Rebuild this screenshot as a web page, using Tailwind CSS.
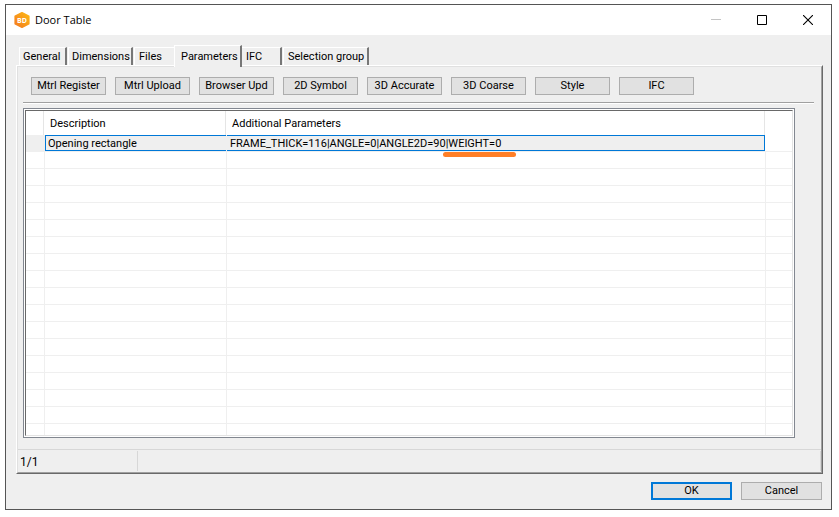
<!DOCTYPE html>
<html lang="en">
<head>
  <meta charset="UTF-8" />
  <meta name="viewport" content="width=device-width, initial-scale=1.0"/>
  <title>Door Table</title>
  <script src="https://cdn.jsdelivr.net/npm/@tailwindcss/browser@4"></script>
</head>
<body class="bg-white text-black text-[11px] leading-4 font-['Roboto','Liberation_Sans',sans-serif]">
  <div class="pt-1 pl-[5px] pr-[7px]">
    <div class="border border-[#555] bg-[#efefef]">

      <!-- Title bar -->
      <header class="flex items-center h-[30px] bg-white pl-2">
        <svg class="w-4 h-4" viewBox="0 0 16 16">
          <defs>
            <linearGradient id="logo" x1="0" y1="1" x2="1" y2="0">
              <stop offset="0" stop-color="#f47b20"/>
              <stop offset="1" stop-color="#fdb813"/>
            </linearGradient>
          </defs>
          <path d="M8 0.8 L14.8 4.2 V11.8 L8 15.2 L1.2 11.8 V4.2 Z" fill="url(#logo)" stroke="url(#logo)" stroke-width="1.6" stroke-linejoin="round"/>
          <text x="8" y="10.6" text-anchor="middle" font-family="Open Sans, sans-serif" font-size="7" font-weight="700" fill="#fff">BD</text>
        </svg>
        <h1 class="ml-[5px] text-[11px] font-['Open_Sans',sans-serif]">Door Table</h1>
        <div class="ml-auto flex h-full">
          <button type="button" aria-label="Minimize" disabled class="w-[46px] flex items-center justify-center">
            <svg class="w-[10px] h-[10px]" viewBox="0 0 10 10"><path d="M0 4.5H10" stroke="#c4c4c4"/></svg>
          </button>
          <button type="button" aria-label="Maximize" class="w-[46px] flex items-center justify-center">
            <svg class="w-[10px] h-[10px]" viewBox="0 0 10 10"><path d="M.5 .5H9.5V9.5H.5Z" fill="none" stroke="#000"/></svg>
          </button>
          <button type="button" aria-label="Close" class="w-[46px] flex items-center justify-center">
            <svg class="w-[10px] h-[10px]" viewBox="0 0 10 10"><path d="M0 0L10 10M10 0L0 10" stroke="#000" stroke-width="1.1"/></svg>
          </button>
        </div>
      </header>

      <main class="px-[10px] pt-[10px] pr-2">
        <!-- Tabs -->
        <div role="tablist" class="flex items-end pl-[3px] h-5">
          <button type="button" role="tab" class="w-12 h-[18px] pl-[3px] text-left border-t border-l border-white border-r-2 border-r-[#777]">General</button>
          <button type="button" role="tab" class="ml-px w-[65px] h-[18px] pl-[3px] text-left border-t border-l border-white border-r-2 border-r-[#777]">Dimensions</button>
          <button type="button" role="tab" class="ml-px w-10 h-[18px] pl-1 text-left border-t border-l border-white">Files</button>
          <button type="button" role="tab" aria-selected="true" class="relative z-10 -mb-[2px] w-[68px] h-[22px] pl-[6px] text-left bg-[#efefef] border-t border-l border-white border-r-2 border-r-[#777]">Parameters</button>
          <button type="button" role="tab" class="w-10 h-[18px] pl-1 text-left border-t border-white border-r-2 border-r-[#777]">IFC</button>
          <button type="button" role="tab" class="ml-px w-[86px] h-[18px] pl-1 text-left border-t border-l border-white border-r-2 border-r-[#777]">Selection group</button>
        </div>

        <section class="border-t border-l border-white border-r border-b border-r-[#696969] border-b-[#696969]">
          <div class="border border-[#e0e0e0] border-r-[#a0a0a0] border-b-[#a0a0a0]">
            <div class="pl-[5px] pr-[26px] pt-[10px]">
              <!-- Tools -->
              <div class="flex gap-[9px] pl-2">
                <button type="button" class="w-[75px] h-[18px] leading-4 bg-[#e1e1e1] border border-[#adadad]">Mtrl Register</button>
                <button type="button" class="w-[75px] h-[18px] leading-4 bg-[#e1e1e1] border border-[#adadad]">Mtrl Upload</button>
                <button type="button" class="w-[75px] h-[18px] leading-4 bg-[#e1e1e1] border border-[#adadad]">Browser Upd</button>
                <button type="button" class="w-[75px] h-[18px] leading-4 bg-[#e1e1e1] border border-[#adadad]">2D Symbol</button>
                <button type="button" class="w-[75px] h-[18px] leading-4 bg-[#e1e1e1] border border-[#adadad]">3D Accurate</button>
                <button type="button" class="w-[75px] h-[18px] leading-4 bg-[#e1e1e1] border border-[#adadad]">3D Coarse</button>
                <button type="button" class="w-[75px] h-[18px] leading-4 bg-[#e1e1e1] border border-[#adadad]">Style</button>
                <button type="button" class="w-[75px] h-[18px] leading-4 bg-[#e1e1e1] border border-[#adadad]">IFC</button>
              </div>
              <div class="mt-[7px] -mr-[19px] h-[2px] bg-[#a0a0a0] border-b border-white"></div>

              <!-- Parameter list -->
              <div class="mt-1 p-px bg-white border border-[#828790]">
                <div class="border border-[#696969] border-r-[#e3e3e3] border-b-[#e3e3e3]">
                  <table class="w-full table-fixed border-separate border-spacing-0">
                    <colgroup>
                      <col class="w-[18px]"><col class="w-[182px]"><col><col class="w-[27px]">
                    </colgroup>
                    <thead>
                      <tr class="h-6 text-left">
                        <th class="p-0 border-r border-[#e5e5e5]"></th>
                        <th class="p-0 pt-[2px] pl-[6px] font-normal border-r border-[#e5e5e5]">Description</th>
                        <th class="p-0 pt-[2px] pl-[6px] font-normal border-r border-[#e5e5e5]">Additional Parameters</th>
                        <th class="p-0"></th>
                      </tr>
                    </thead>
                    <tbody id="rows">
                      <tr class="h-[17px]">
                        <td class="p-0 bg-[#efefef]"></td>
                        <td class="p-0 border-l border-b border-[#efefef]">
                          <div class="h-4 pl-[2px] leading-4 bg-[#efefef] border-y border-l border-[#0078d7]">Opening rectangle</div>
                        </td>
                        <td class="p-0 border-l border-b border-[#efefef]">
                          <div class="h-4 pl-[3px] leading-4 whitespace-nowrap bg-[#efefef] border-y border-r border-[#0078d7]">FRAME_THICK=116|ANGLE=0|ANGLE2D=9<span class="relative">0|WEIGHT=0<span class="absolute left-[3px] -right-[15px] top-[15px] h-[5px] rounded-full bg-[#ff7f27]"></span></span></div>
                        </td>
                        <td class="p-0 border-b border-[#efefef]"></td>
                      </tr>
                    </tbody>
                  </table>
                </div>
              </div>
            </div>

            <!-- Status bar -->
            <footer class="mt-[11px] flex h-[23px] border-t border-[#d7d7d7]">
              <span class="w-[120px] my-px pl-[2px] leading-[22px] text-xs border-r border-[#d7d7d7]">1/1</span>
              <span class="flex-1 my-px border-r border-[#d7d7d7]"></span>
            </footer>
          </div>
        </section>

        <div class="flex justify-end gap-[9px] pt-2 pr-px pb-[9px]">
          <button type="button" class="w-[81px] h-[18px] leading-[14px] bg-[#e1e1e1] border-2 border-[#0078d7]">OK</button>
          <button type="button" class="w-[81px] h-[18px] leading-4 bg-[#e1e1e1] border border-[#adadad]">Cancel</button>
        </div>
      </main>
    </div>
  </div>

  <script>
    // Fill the rest of the list with empty rows, the last one is cut off
    const rows = document.getElementById("rows");
    for (let i = 0; i < 16; i++) {
      rows.insertAdjacentHTML("beforeend", `
        <tr class="h-[17px]">
          <td class="p-0 border-b border-[#efefef]"></td>
          <td class="p-0 border-l border-b border-[#efefef]"></td>
          <td class="p-0 border-l border-b border-[#efefef]"></td>
          <td class="p-0 border-l border-b border-[#efefef]"></td>
        </tr>`);
    }
    rows.insertAdjacentHTML("beforeend", `
      <tr class="h-[11px]">
        <td class="p-0"></td>
        <td class="p-0 border-l border-[#efefef]"></td>
        <td class="p-0 border-l border-[#efefef]"></td>
        <td class="p-0 border-l border-[#efefef]"></td>
      </tr>`);
  </script>
</body>
</html>
